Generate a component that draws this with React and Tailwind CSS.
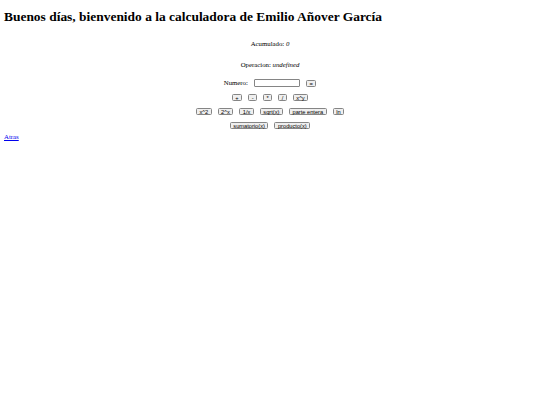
export default function App() {
  const btn =
    "px-[2.5px] h-[7px] leading-[6px] text-[5.7px] font-['Liberation_Sans',sans-serif] bg-[#efefef] border-[0.5px] border-[#858585] rounded-[1.5px] text-black";
  return (
    <div className="font-['Liberation_Serif',serif] text-black bg-white min-h-[405px] px-[4px]">
      <h1 className="text-[13.45px] font-bold leading-[16px] pt-[9px] m-0">
        Buenos días, bienvenido a la calculadora de Emilio Añover García
      </h1>
      <div className="text-center text-[6.8px] leading-[8px]">
        <p className="mt-[15px]">
          Acumulado: <i>0</i>
        </p>
        <p className="mt-[13px]">
          Operacion: <i>undefined</i>
        </p>
        <div className="mt-[10px] h-[8px] flex justify-center items-center gap-[6px]">
          <span>Numero:</span>
          <span className="inline-block w-[46px] h-[8px] border-[0.5px] border-[#858585] rounded-[1px] bg-white" />
          <button className={btn}>=</button>
        </div>
        <div className="mt-[7px] flex justify-center items-center gap-[6px]">
          <button className={btn}>+</button>
          <button className={btn}>-</button>
          <button className={btn}>*</button>
          <button className={btn}>/</button>
          <button className={btn}>x^y</button>
        </div>
        <div className="mt-[7px] flex justify-center items-center gap-[6px]">
          <button className={btn}>x^2</button>
          <button className={btn}>2^x</button>
          <button className={btn}>1/x</button>
          <button className={btn}>sqrt(x)</button>
          <button className={btn}>parte entera</button>
          <button className={btn}>ln</button>
        </div>
        <div className="mt-[7px] flex justify-center items-center gap-[6px]">
          <button className={btn}>sumatorio(x)</button>
          <button className={btn}>producto(x)</button>
        </div>
      </div>
      <a href="#" className="block text-[6.8px] leading-[8px] mt-[4px] text-[#0000ee] underline">
        Atras
      </a>
    </div>
  );
}
